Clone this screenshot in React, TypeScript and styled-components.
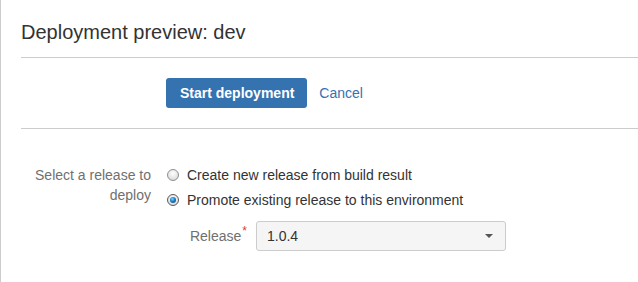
import React from 'react';
import styled, { createGlobalStyle } from 'styled-components';

const GlobalStyle = createGlobalStyle`
  html, body {
    margin: 0;
    padding: 0;
    background: #ffffff;
  }
  body {
    font-family: "Liberation Sans", Arial, sans-serif;
    font-size: 14px;
    color: #333333;
  }
`;

const Page = styled.div`
  min-height: 282px;
  border-left: 1px solid #cccccc;
  padding-left: 20px;
  box-sizing: border-box;
`;

const Header = styled.header`
  padding: 20px 0 13px;
  border-bottom: 1px solid #cccccc;
`;

const Title = styled.h2`
  margin: 0;
  font-size: 20px;
  line-height: 24px;
  font-weight: 400;
  color: #333333;
`;

const Actions = styled.div`
  display: flex;
  align-items: center;
  gap: 12px;
  padding: 20px 0 20px 145px;
  border-bottom: 1px solid #cccccc;
`;

const PrimaryButton = styled.button`
  height: 30px;
  padding: 0 13px 0 14px;
  border: 0;
  border-radius: 3px;
  background: #3572b0;
  color: #ffffff;
  font-family: inherit;
  font-size: 14px;
  font-weight: 700;
  cursor: pointer;
`;

const LinkButton = styled.a`
  color: #3572b0;
  text-decoration: none;
  font-size: 14px;
`;

const Form = styled.div`
  display: grid;
  grid-template-columns: 130px 1fr;
  column-gap: 16px;
  padding-top: 36px;
`;

const FieldLabel = styled.div`
  text-align: right;
  color: #707070;
  line-height: 20px;
`;

const Options = styled.div`
  display: flex;
  flex-direction: column;
  gap: 5px;
`;

const RadioRow = styled.label`
  display: flex;
  align-items: center;
  gap: 8px;
  height: 20px;
  line-height: 20px;
  color: #333333;
`;

const Radio = styled.span<{ $checked?: boolean }>`
  position: relative;
  width: 10px;
  height: 10px;
  border-radius: 50%;
  border: 1px solid ${(p) => (p.$checked ? '#5a5a5a' : '#8f8f8f')};
  background: radial-gradient(circle at 50% 35%, #ffffff 0%, #e6e6e6 55%, #cfcfcf 100%);
  flex: none;

  &::after {
    content: '';
    display: ${(p) => (p.$checked ? 'block' : 'none')};
    position: absolute;
    left: 2px;
    top: 2px;
    width: 6px;
    height: 6px;
    border-radius: 50%;
    background: radial-gradient(circle at 40% 35%, #7fd0ff 0%, #1a7fc4 45%, #0b3f6e 100%);
  }
`;

const SubRow = styled.div`
  display: flex;
  align-items: center;
  gap: 9px;
  margin-top: 11px;
`;

const SubLabel = styled.span`
  width: 80px;
  text-align: right;
  color: #707070;
`;

const Required = styled.sup`
  color: #d04437;
  font-size: 12px;
  line-height: 0;
  margin-left: 1px;
`;

const Select = styled.div`
  display: flex;
  align-items: center;
  justify-content: space-between;
  box-sizing: border-box;
  width: 250px;
  height: 30px;
  padding: 0 12px 0 10px;
  border: 1px solid #cccccc;
  border-radius: 3px;
  background: #f5f5f5;
  color: #333333;
`;

const Caret = styled.span`
  width: 0;
  height: 0;
  border-left: 4px solid transparent;
  border-right: 4px solid transparent;
  border-top: 4px solid #555555;
`;

export default function App() {
  return (
    <>
      <GlobalStyle />
      <Page>
        <Header>
          <Title>Deployment preview: dev</Title>
        </Header>
        <Actions>
          <PrimaryButton>Start deployment</PrimaryButton>
          <LinkButton href="#">Cancel</LinkButton>
        </Actions>
        <Form>
          <FieldLabel>
            Select a release to
            <br />
            deploy
          </FieldLabel>
          <div>
            <Options>
              <RadioRow>
                <Radio />
                Create new release from build result
              </RadioRow>
              <RadioRow>
                <Radio $checked />
                Promote existing release to this environment
              </RadioRow>
            </Options>
            <SubRow>
              <SubLabel>
                Release<Required>*</Required>
              </SubLabel>
              <Select>
                <span>1.0.4</span>
                <Caret />
              </Select>
            </SubRow>
          </div>
        </Form>
      </Page>
    </>
  );
}
